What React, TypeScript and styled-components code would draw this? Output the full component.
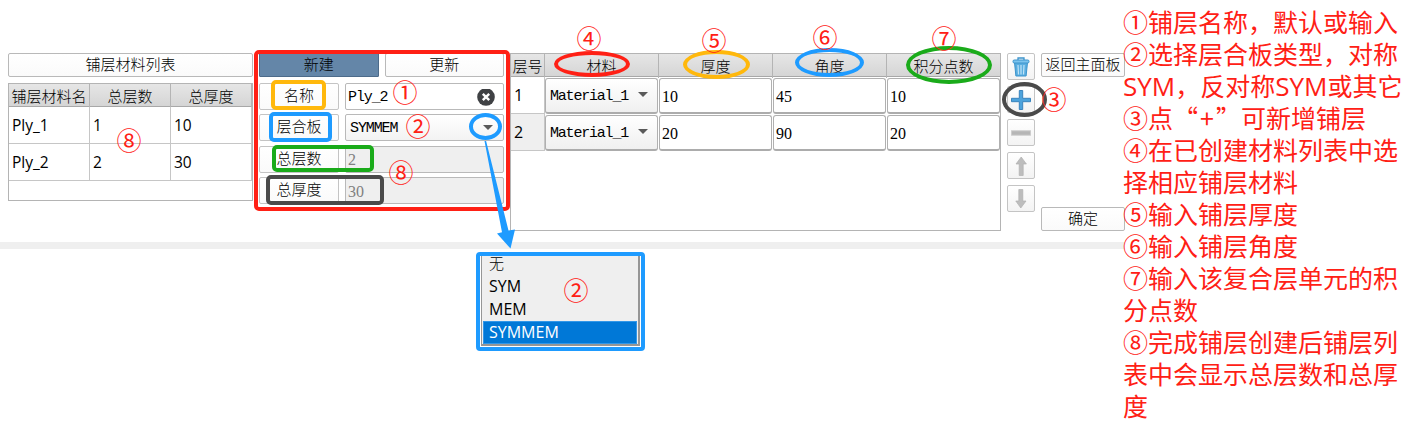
import React from "react";
import styled, { createGlobalStyle, css } from "styled-components";

const RED = "#ff2015";
const BLUE = "#1e9bff";
const AMBER = "#ffb80c";
const GREEN = "#1aab1a";
const DARK = "#4a4a4a";

const sans = `"Open Sans", "Noto Sans CJK SC", sans-serif`;
const song = `"Liberation Mono", "Noto Sans CJK SC", monospace`;
const songDigits = `"Liberation Serif", "Noto Sans CJK SC", serif`;

const Global = createGlobalStyle`
  * { box-sizing: border-box; }
  body { margin: 0; background: #fff; color: #000; font: 15px ${sans}; overflow: hidden; }
`;

const Page = styled.div`
  position: relative;
  display: flex;
  width: 1406px;
  height: 432px;
  overflow: hidden;
`;

const Workspace = styled.main`
  width: 1125px;
  flex: none;
  padding-top: 53px;
`;

const Panels = styled.div`
  display: flex;
  gap: 6px;
  height: 178px;
  padding-left: 8px;
`;

const Divider = styled.div`
  height: 7px;
  margin-top: 11px;
  background: #efefef;
`;

const Column = styled.section<{ $w: number; $spread?: boolean }>`
  display: flex;
  flex-direction: column;
  flex: none;
  width: ${(p) => p.$w}px;
  gap: 6px;
  justify-content: ${(p) => (p.$spread ? "space-between" : "flex-start")};
`;

const Button = styled.button<{ $active?: boolean }>`
  display: flex;
  align-items: center;
  justify-content: center;
  flex: 1 1 0;
  height: 24px;
  max-height: 24px;
  min-height: 24px;
  padding: 4px 0 0;
  border: 1px solid ${(p) => (p.$active ? "#4d6b8a" : "#b9b9b9")};
  border-radius: ${(p) => (p.$active ? 1 : 2)}px;
  background: ${(p) => (p.$active ? "#6486a8" : "linear-gradient(#fff, #fafafa)")};
  color: #000;
  font: 300 15px/22px ${song};
  white-space: nowrap;
`;

const PlyTable = styled.div`
  height: 118px;
  border: 1px solid #b4b4b4;
`;

const headFill = css`
  background: linear-gradient(#e6e6e6, #d5d5d5);
  border-bottom: 1px solid #a8a8a8;
`;

const PlyRow = styled.div<{ $head?: boolean }>`
  display: grid;
  grid-template-columns: 81px 81px 81px;
  height: ${(p) => (p.$head ? 23 : 37)}px;
  font-size: ${(p) => (p.$head ? 15 : 15.5)}px;
  line-height: ${(p) => (p.$head ? 25 : 36)}px;
  text-align: ${(p) => (p.$head ? "center" : "left")};
  ${(p) => p.$head && headFill}
`;

const PlyCell = styled.div<{ $head?: boolean }>`
  padding-left: ${(p) => (p.$head ? 0 : 3)}px;
  border-right: 1px solid ${(p) => (p.$head ? "#b4b4b4" : "#c6c6c6")};
  border-bottom: ${(p) => (p.$head ? "0" : "1px solid #c6c6c6")};
  font-weight: ${(p) => (p.$head ? 300 : 400)};
  white-space: nowrap;
`;

const ButtonRow = styled.div`
  display: flex;
  gap: 6px;
`;

const Form = styled.div`
  display: flex;
  flex-direction: column;
  gap: 5.4px;
`;

const FormRow = styled.label`
  display: grid;
  grid-template-columns: 80px 159px;
  gap: 6px;
  height: 26px;
`;

const FormLabel = styled.span`
  display: flex;
  align-items: center;
  justify-content: center;
  padding-top: 3px;
  border: 1px solid #c4c4c4;
  border-radius: 2px;
  background: linear-gradient(#fff, #fafafa);
  font: 300 15px/22px ${song};
`;

const Field = styled.span<{ $kind: "input" | "select" | "readonly" }>`
  display: flex;
  align-items: center;
  justify-content: space-between;
  padding: 2px ${(p) => (p.$kind === "select" ? 10 : 8)}px 0 ${(p) => (p.$kind === "select" ? 4 : 2)}px;
  border: 1px solid #b9b9b9;
  border-radius: 2px;
  background: ${(p) => (p.$kind === "input" ? "#fff" : p.$kind === "select" ? "linear-gradient(#fff, #f3f3f3)" : "#efefef")};
  color: ${(p) => (p.$kind === "readonly" ? "#808080" : "#000")};
  font: ${(p) => (p.$kind === "readonly" ? `16px/20px ${songDigits}` : `15px/20px ${song}`)};
  letter-spacing: ${(p) => (p.$kind === "readonly" ? 0 : -1.1)}px;
`;

const Caret = styled.i`
  width: 0;
  height: 0;
  margin-bottom: 2px;
  border: 5px solid transparent;
  border-top-color: #5a5a5a;
  border-bottom: 0;
`;

const LayerTable = styled.section`
  flex: none;
  width: 491px;
  border: 1px solid #b4b4b4;
`;

const LayerRow = styled.div<{ $head?: boolean }>`
  display: grid;
  grid-template-columns: 34px repeat(4, 114px);
  height: ${(p) => (p.$head ? 23 : 37)}px;
  ${(p) => p.$head && headFill}
`;

const LayerHead = styled.div`
  border-right: 1px solid #b4b4b4;
  font-weight: 300;
  line-height: 24px;
  text-align: center;
  white-space: nowrap;
`;

const LayerIndex = styled.div<{ $alt?: boolean }>`
  padding-left: 3px;
  border-right: 1px solid #c6c6c6;
  border-bottom: 1px solid #c6c6c6;
  background: ${(p) => (p.$alt ? "#efefef" : "#fff")};
  font-size: 16px;
  line-height: 36px;
`;

const LayerCell = styled.div<{ $select?: boolean }>`
  display: flex;
  align-items: center;
  justify-content: space-between;
  margin: 1px 1px 0 0;
  padding: 3px 9px 0 ${(p) => (p.$select ? 4 : 2)}px;
  border: 1px solid #b0b0b0;
  border-bottom: 2px solid #acacac;
  border-radius: 3px;
  background: ${(p) => (p.$select ? "linear-gradient(#fff, #f0f0f0)" : "#fff")};
  font: ${(p) => (p.$select ? `15px/20px ${song}` : `16px/20px ${songDigits}`)};
  letter-spacing: ${(p) => (p.$select ? -1.2 : 0)}px;

  ${Caret} {
    margin-bottom: 5px;
  }
`;

const ToolButton = styled.button`
  display: grid;
  place-items: center;
  width: 28px;
  height: 27px;
  padding: 0;
  border: 1px solid #c4c4c4;
  border-radius: 2px;
  background: linear-gradient(#fff, #f3f3f3);
`;

const Menu = styled.div`
  position: absolute;
  left: 476px;
  top: 252px;
  width: 169px;
  height: 99px;
  padding: 0 1px 1px;
  border: 4px solid ${BLUE};
  border-radius: 4px;
  background: #fff;
`;

const MenuList = styled.div`
  height: 90px;
  padding: 0 1px 1px;
  border: solid #969696;
  border-width: 0 2px 2px 1px;
  background: #efefef;
  overflow: hidden;
`;

const MenuItem = styled.div<{ $on?: boolean; $first?: boolean }>`
  height: 23px;
  margin-top: ${(p) => (p.$first ? -4 : 0)}px;
  padding-left: 5px;
  border: 1px solid ${(p) => (p.$on ? "#3297e8" : "transparent")};
  background: ${(p) => (p.$on ? "#0078d7" : "transparent")};
  color: ${(p) => (p.$on ? "#fff" : "#000")};
  font-size: ${(p) => (p.$first ? 15 : 16)}px;
  font-weight: ${(p) => (p.$first ? 300 : 400)};
  line-height: 21px;
`;

const Frame = styled.div<{ $x: number; $y: number; $w: number; $h: number; $c: string }>`
  position: absolute;
  left: ${(p) => p.$x}px;
  top: ${(p) => p.$y}px;
  width: ${(p) => p.$w}px;
  height: ${(p) => p.$h}px;
  border: 4px solid ${(p) => p.$c};
  border-radius: 5px;
`;

const Ring = styled(Frame)`
  border-radius: 50%;
`;

const Mark = styled.span<{ $x: number; $y: number }>`
  position: absolute;
  left: ${(p) => p.$x - 15}px;
  top: ${(p) => p.$y - 16}px;
  width: 30px;
  height: 30px;
  color: ${RED};
  font: 400 25px/30px "Noto Sans CJK SC", sans-serif;
  text-align: center;
`;

const Arrow = styled.svg`
  position: absolute;
  left: 480px;
  top: 138px;
`;

const Notes = styled.aside`
  position: relative;
  flex: none;
  margin-left: -2px;
  padding-top: 5px;
  color: ${RED};
  font: 400 25px/32px "Noto Sans CJK SC", sans-serif;
  white-space: nowrap;
`;

const NoteLine = styled.div`
  height: 32px;
`;

const Latin = styled.span`
  font: 400 26px/30px "Open Sans", sans-serif;
`;

const PlusSign = styled.span`
  display: inline-block;
  width: 18px;
  text-align: center;
`;

const plies = [
  ["Ply_1", "1", "10"],
  ["Ply_2", "2", "30"],
];

const layers = [
  ["Material_1", "10", "45", "10"],
  ["Material_1", "20", "90", "20"],
];

const marks: [string, number, number][] = [
  ["①", 405, 92],
  ["②", 418, 126],
  ["⑧", 401, 172],
  ["⑧", 129, 140],
  ["④", 589, 38],
  ["⑤", 714, 40],
  ["⑥", 825, 37],
  ["⑦", 944, 38],
  ["③", 1054, 99],
  ["②", 576, 290],
];

const ClearIcon = () => (
  <svg width="18" height="18" viewBox="0 0 18 18">
    <circle cx="9" cy="8" r="8.8" fill="#3f4144" />
    <path d="M5.800 4.800l6.400 6.400M12.200 4.800l-6.400 6.400" stroke="#fff" strokeWidth="2.400" />
  </svg>
);

const TrashIcon = () => (
  <svg width="18" height="20" viewBox="0 0 18 20">
    <path d="M2.500 5.500h13l-1.400 13.500H3.900z" fill="#5aaee0" stroke="#3c94cc" />
    <path d="M6 8l.5 9.500M9 8v9.500M12 8l-.5 9.500" stroke="#bfe3f7" strokeWidth="1.200" />
    <rect x="1" y="3" width="16" height="3" rx="1.200" fill="#7cc4ee" stroke="#3c94cc" />
    <path d="M6 3V1h6v2" fill="none" stroke="#3c94cc" strokeWidth="1.300" />
  </svg>
);

const PlusIcon = () => (
  <svg width="20" height="20" viewBox="0 0 20 20">
    <path d="M8.300.5h3.400v7.800h7.800v3.400h-7.800v7.800H8.300v-7.800H.5V8.300h7.800z" fill="#4da3dc" stroke="#3a84bd" />
  </svg>
);

const MinusIcon = () => (
  <svg width="20" height="6" viewBox="0 0 20 6">
    <rect x=".5" y=".8" width="19" height="4.400" fill="#b6b6b6" stroke="#cdcdcd" />
  </svg>
);

const ArrowIcon = ({ down }: { down?: boolean }) => (
  <svg width="12" height="20" viewBox="0 0 12 20">
    <path
      d={down ? "M3.800.5h4v11.500H11L5.800 19 .8 12h3z" : "M4.200 19.500h4V8h3.200L6.200 1 1 8h3.200z"}
      fill="#bdbdbd"
      stroke="#b0b0b0"
      strokeWidth=".7"
    />
  </svg>
);

export default function App() {
  return (
    <Page>
      <Global />
      <Workspace>
        <Panels>
          <Column $w={245}>
            <ButtonRow>
              <Button>铺层材料列表</Button>
            </ButtonRow>
            <PlyTable>
              <PlyRow $head>
                {["铺层材料名", "总层数", "总厚度"].map((t) => (
                  <PlyCell $head key={t}>{t}</PlyCell>
                ))}
              </PlyRow>
              {plies.map((row) => (
                <PlyRow key={row[0]}>
                  {row.map((t, i) => (
                    <PlyCell key={i}>{t}</PlyCell>
                  ))}
                </PlyRow>
              ))}
            </PlyTable>
          </Column>

          <Column $w={245}>
            <ButtonRow>
              <Button $active>新建</Button>
              <Button>更新</Button>
            </ButtonRow>
            <Form>
              <FormRow>
                <FormLabel>名称</FormLabel>
                <Field $kind="input">Ply_2<ClearIcon /></Field>
              </FormRow>
              <FormRow>
                <FormLabel>层合板</FormLabel>
                <Field $kind="select">SYMMEM<Caret /></Field>
              </FormRow>
              <FormRow>
                <FormLabel>总层数</FormLabel>
                <Field $kind="readonly">2</Field>
              </FormRow>
              <FormRow>
                <FormLabel>总厚度</FormLabel>
                <Field $kind="readonly">30</Field>
              </FormRow>
            </Form>
          </Column>

          <LayerTable>
            <LayerRow $head>
              {["层号", "材料", "厚度", "角度", "积分点数"].map((t) => (
                <LayerHead key={t}>{t}</LayerHead>
              ))}
            </LayerRow>
            {layers.map((row, r) => (
              <LayerRow key={r}>
                <LayerIndex $alt={r === 1}>{r + 1}</LayerIndex>
                {row.map((t, i) => (
                  <LayerCell key={i} $select={i === 0}>
                    {t}
                    {i === 0 && <Caret />}
                  </LayerCell>
                ))}
              </LayerRow>
            ))}
          </LayerTable>

          <Column $w={28}>
            <ToolButton><TrashIcon /></ToolButton>
            <ToolButton><PlusIcon /></ToolButton>
            <ToolButton><MinusIcon /></ToolButton>
            <ToolButton><ArrowIcon /></ToolButton>
            <ToolButton><ArrowIcon down /></ToolButton>
          </Column>

          <Column $w={84} $spread>
            <Button>返回主面板</Button>
            <Button>确定</Button>
          </Column>
        </Panels>
        <Divider />
      </Workspace>

      <Notes>
        <NoteLine>①铺层名称，默认或输入</NoteLine>
        <NoteLine>②选择层合板类型，对称</NoteLine>
        <NoteLine><Latin>SYM</Latin>，反对称<Latin>SYM</Latin>或其它</NoteLine>
        <NoteLine>③点“<PlusSign>+</PlusSign>”可新增铺层</NoteLine>
        <NoteLine>④在已创建材料列表中选</NoteLine>
        <NoteLine>择相应铺层材料</NoteLine>
        <NoteLine>⑤输入铺层厚度</NoteLine>
        <NoteLine>⑥输入铺层角度</NoteLine>
        <NoteLine>⑦输入该复合层单元的积</NoteLine>
        <NoteLine>分点数</NoteLine>
        <NoteLine>⑧完成铺层创建后铺层列</NoteLine>
        <NoteLine>表中会显示总层数和总厚</NoteLine>
        <NoteLine>度</NoteLine>
      </Notes>

      <Menu>
        <MenuList>
          <MenuItem $first>无</MenuItem>
          <MenuItem>SYM</MenuItem>
          <MenuItem>MEM</MenuItem>
          <MenuItem $on>SYMMEM</MenuItem>
        </MenuList>
      </Menu>

      <Frame $x={254} $y={50} $w={256} $h={161} $c={RED} />
      <Frame $x={271} $y={80} $w={55} $h={30} $c={AMBER} />
      <Frame $x={269} $y={112} $w={63} $h={30} $c={BLUE} />
      <Frame $x={272} $y={145} $w={102} $h={27} $c={GREEN} />
      <Frame $x={266} $y={175} $w={118} $h={30} $c={DARK} />
      <Ring $x={469} $y={113} $w={33} $h={27} $c={BLUE} />
      <Ring $x={554} $y={51} $w={76} $h={26} $c={RED} />
      <Ring $x={683} $y={50} $w={67} $h={29} $c={AMBER} />
      <Ring $x={795} $y={48} $w={69} $h={29} $c={BLUE} />
      <Ring $x={906} $y={46} $w={86} $h={38} $c={GREEN} />
      <Ring $x={1002} $y={82} $w={45} $h={35} $c={DARK} />
      <Arrow width="40" height="112" viewBox="0 0 40 112">
        <path d="M4.500 3h1.600L28.500 92.500l6.500-1-4.500 19L17 95.500l5-1.200z" fill={BLUE} />
      </Arrow>
      {marks.map(([t, x, y], i) => (
        <Mark key={i} $x={x} $y={y}>{t}</Mark>
      ))}
    </Page>
  );
}
